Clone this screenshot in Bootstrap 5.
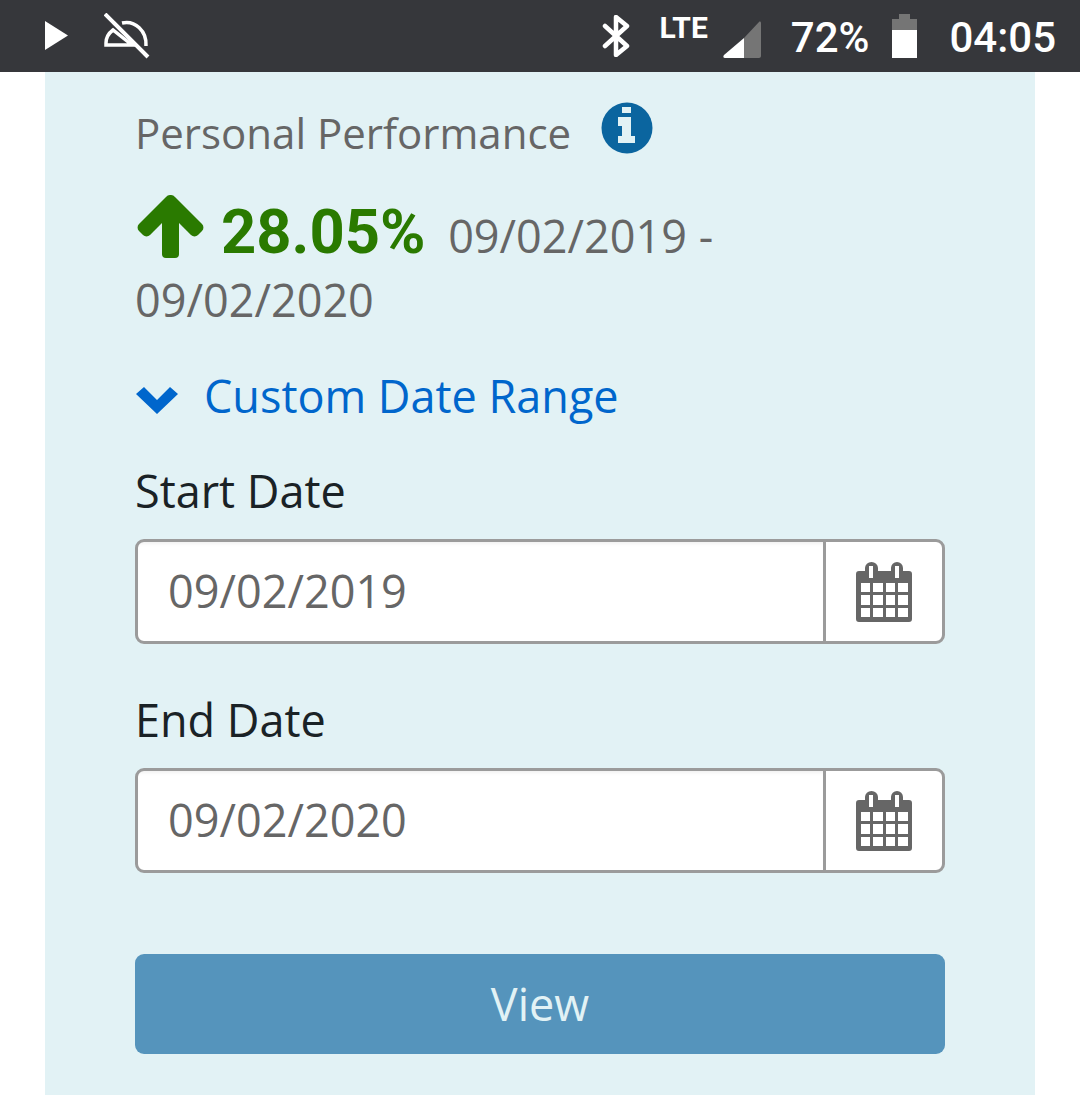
<!DOCTYPE html>
<html lang="en"><head><meta charset="utf-8">
<link href="https://cdn.jsdelivr.net/npm/bootstrap@5.3.0/dist/css/bootstrap.min.css" rel="stylesheet">
<style>
html,body{height:1095px;overflow:hidden;background:#fff}
body{font-family:"Open Sans","Noto Sans",sans-serif}
.sbar{height:72px;background:#36373b;color:#fff;font-family:Roboto,sans-serif;padding:0 24px 0 44px}
.sbar-txt{font-size:42px;line-height:1;font-weight:500;margin-top:4px}
.lte{font-size:30px;font-weight:700;line-height:1;margin-top:-16px;margin-left:29px}
.sig{margin-left:15px;margin-top:6px}
.pcttxt{margin-left:30px}
.batt{margin-left:23px}
.clock{margin-left:32px}
.ico-play{margin-right:36px}
.panel{margin:0 45px;height:1023px;background:#e2f2f5;padding:0 90px}
.ptitle{font-size:42px;color:#666;line-height:52px;padding-top:35px;height:100px}
.infoico{margin-left:30px;margin-top:-5px}
.pline{font-size:45px;color:#666;line-height:64px;margin-top:23px;height:128px}
.upico{vertical-align:-6px;margin-left:2px;margin-right:17px}
.pct{font-family:Roboto,sans-serif;font-weight:700;font-size:61.5px;color:#2a7a00;margin-right:11px}
.rangelink{color:#0066cc;font-size:45px;line-height:56px;margin-top:45px;height:56px}
.chev{margin-left:1px;margin-right:26px;margin-top:8px}
.flabel{font-size:45px;line-height:56px;color:#1a2226;margin:0}
.l1{margin-top:39px;margin-bottom:20px}
.l2{margin-top:48px;margin-bottom:20px}
.dgroup{height:105px;border:3px solid #9b9b9b;border-radius:9px;background:#fff;overflow:hidden}
.dinput{font-size:45px;color:#666;padding-left:30px;line-height:98px;box-shadow:inset 0 4px 4px -3px rgba(0,0,0,.08)}
.dbtn{width:119px;border-left:3px solid #9b9b9b}
.viewbtn{display:block;width:100%;height:100px;margin-top:81px;background:#5594bc;border:0;border-radius:9px;color:#e2f2f5;font-size:45px;line-height:100px;padding:0}
</style></head><body>
<div class="sbar d-flex align-items-center">
<svg class="ico-play" width="24" height="30" viewBox="0 0 24 30"><path fill="#fff" d="M1 0 24 14.5 1 29z"/></svg>
<svg width="46" height="46" viewBox="0 0 46 46" fill="none" stroke="#fff"><path stroke-width="4" d="M1 1 44 44"/><path stroke-width="3.5" d="M2 32V30C2 24 5 20 9 17L28 32H2Z"/><path stroke-width="3.5" d="M18 10C31 7 43 18 42 33"/></svg>
<div class="ms-auto d-flex align-items-center">
<svg width="30" height="42" viewBox="0 0 30 42" fill="none" stroke="#fff" stroke-width="4.5" stroke-linejoin="round" stroke-linecap="round"><path d="M5 11 27 31 16 40V2L27 11 5 31"/></svg>
<span class="lte">LTE</span>
<svg class="sig" width="38" height="38" viewBox="0 0 38 38"><path fill="#757575" d="M21 18 36 2c1-1 2 0 2 1v33c0 1-1 2-2 2H21z"/><path fill="#fff" d="M21 18V38H2c-2 0-2-2-1-3z"/></svg>
<span class="sbar-txt pcttxt">72%</span>
<svg class="batt" width="25" height="44" viewBox="0 0 25 44"><path fill="#757575" d="M7 0h11v5h7v13H0V5h7z"/><path fill="#fff" d="M0 16h25v28H0z"/></svg>
<span class="sbar-txt clock">04:05</span>
</div></div>
<div class="panel">
<div class="ptitle d-flex align-items-start"><span>Personal Performance</span>
<svg class="infoico" width="52" height="52" viewBox="0 0 52 52"><circle cx="26" cy="26" r="25.5" fill="#0b659f"/><path fill="#e2f2f5" d="M21 5h9v6h-9zM17 15h13v19h4v7H17v-7h4V24h-4z"/></svg></div>
<div class="pline"><svg class="upico" width="67" height="64" viewBox="0 0 67 64"><path fill="#2a7a00" d="M29 2a6 6 0 0 1 9 0L65 29a5 5 0 0 1 0 7L61 40a5 5 0 0 1-7 0L42 28V59a4 4 0 0 1-4 4H29a4 4 0 0 1-4-4V28L13 40a5 5 0 0 1-7 0L2 36a5 5 0 0 1 0-7z"/></svg><span class="pct">28.05%</span> 09/02/2019 -<br>09/02/2020</div>
<div class="rangelink d-flex align-items-center"><svg class="chev" width="42" height="27" viewBox="0 0 42 27"><path fill="#0066cc" d="M0 7 8 0 21 13 34 0 42 7 21 27z"/></svg>Custom Date Range</div>
<p class="flabel l1">Start Date</p>
<div class="dgroup d-flex"><div class="dinput flex-grow-1">09/02/2019</div><div class="dbtn d-flex align-items-center justify-content-center"><svg width="56" height="60" viewBox="0 0 56 60"><path fill="#666" fill-rule="evenodd" d="M3 9h6V6a6.5 6 0 0 1 13 0v3h13V6a6 6 0 0 1 12 0v3h6a3 3 0 0 1 3 3v45a3 3 0 0 1-3 3H3a3 3 0 0 1-3-3V12a3 3 0 0 1 3-3zM13 4v12h4V4zM39 4v12h4V4zM5 21v9h9v-9zM17 21v9h10v-9zM30 21v9h9v-9zM42 21v9h10v-9zM5 33v10h9V33zM17 33v10h10V33zM30 33v10h9V33zM42 33v10h10V33zM5 46v9h9v-9zM17 46v9h10v-9zM30 46v9h9v-9zM42 46v9h10v-9z"/></svg></div></div>
<p class="flabel l2">End Date</p>
<div class="dgroup d-flex"><div class="dinput flex-grow-1">09/02/2020</div><div class="dbtn d-flex align-items-center justify-content-center"><svg width="56" height="60" viewBox="0 0 56 60"><path fill="#666" fill-rule="evenodd" d="M3 9h6V6a6.5 6 0 0 1 13 0v3h13V6a6 6 0 0 1 12 0v3h6a3 3 0 0 1 3 3v45a3 3 0 0 1-3 3H3a3 3 0 0 1-3-3V12a3 3 0 0 1 3-3zM13 4v12h4V4zM39 4v12h4V4zM5 21v9h9v-9zM17 21v9h10v-9zM30 21v9h9v-9zM42 21v9h10v-9zM5 33v10h9V33zM17 33v10h10V33zM30 33v10h9V33zM42 33v10h10V33zM5 46v9h9v-9zM17 46v9h10v-9zM30 46v9h9v-9zM42 46v9h10v-9z"/></svg></div></div>
<button class="btn viewbtn" type="button">View</button>
</div>
<script src="https://cdn.jsdelivr.net/npm/bootstrap@5.3.0/dist/js/bootstrap.bundle.min.js"></script>
</body></html>
